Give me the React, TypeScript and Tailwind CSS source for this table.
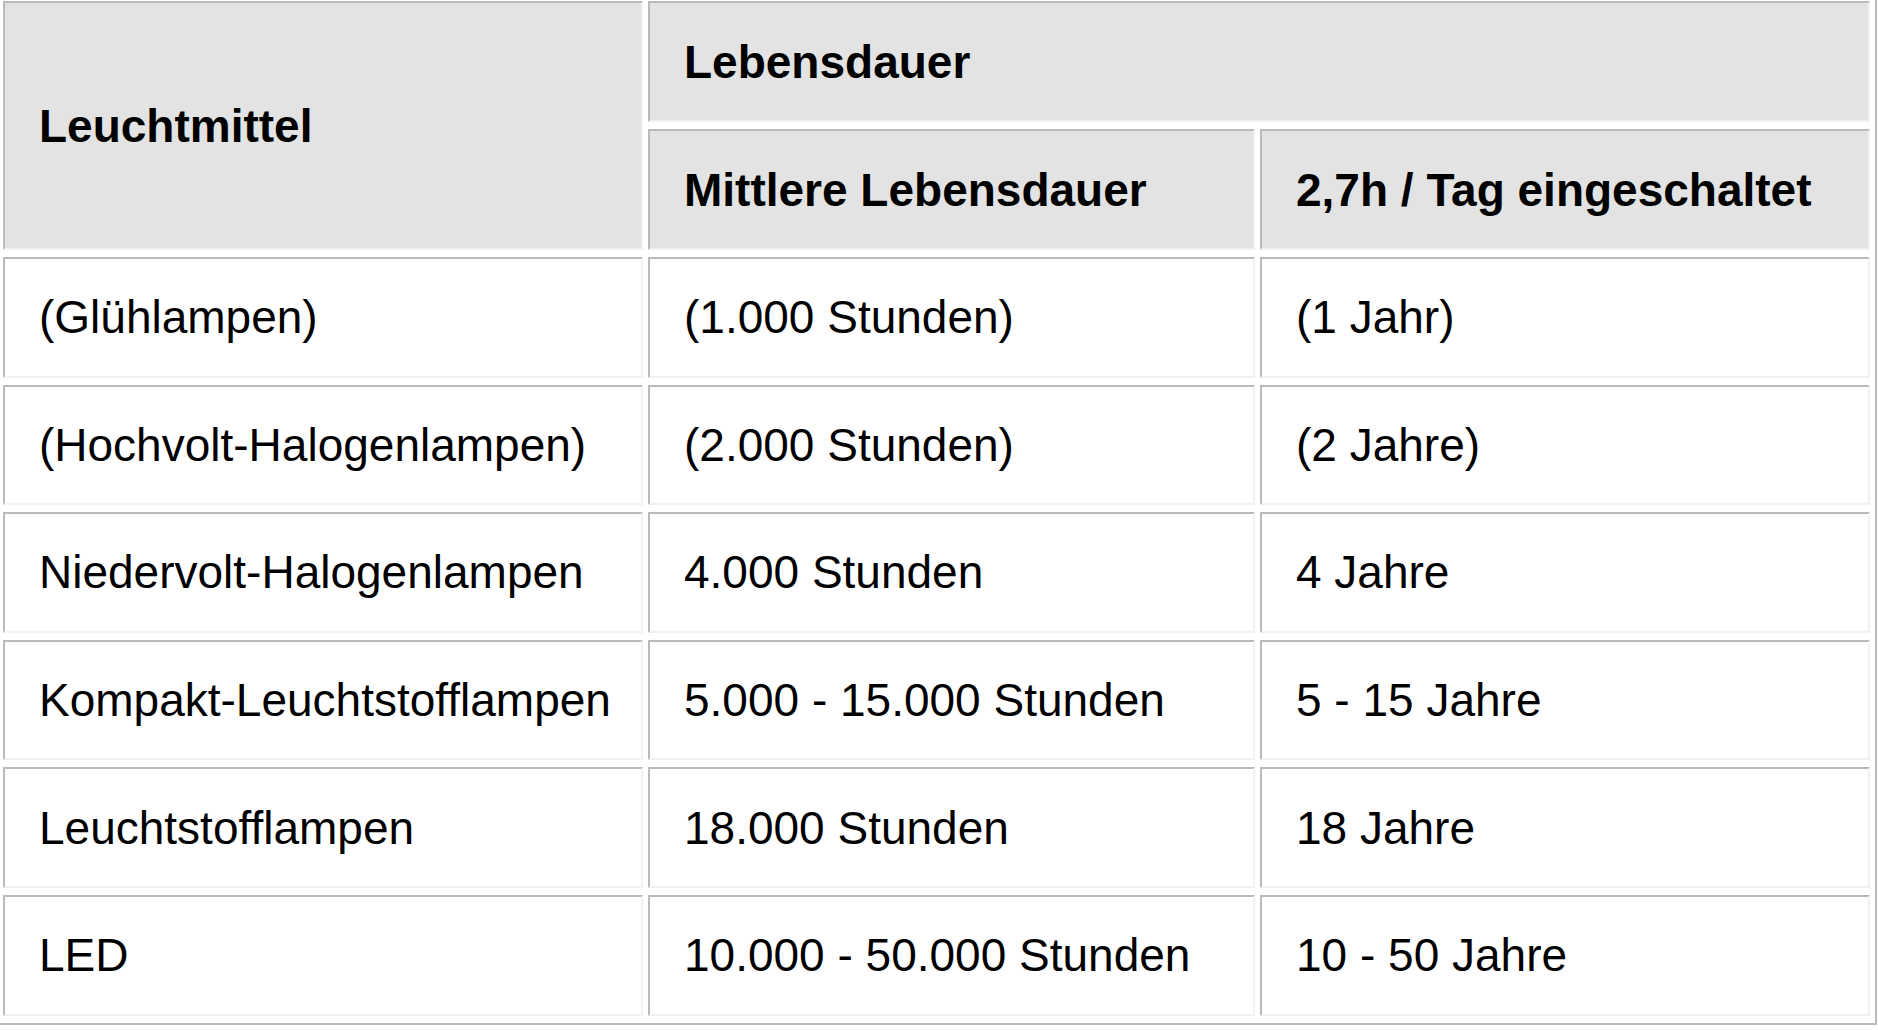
import React from "react";

const rows: [string, string, string][] = [
  ["(Glühlampen)", "(1.000 Stunden)", "(1 Jahr)"],
  ["(Hochvolt-Halogenlampen)", "(2.000 Stunden)", "(2 Jahre)"],
  ["Niedervolt-Halogenlampen", "4.000 Stunden", "4 Jahre"],
  ["Kompakt-Leuchtstofflampen", "5.000 - 15.000 Stunden", "5 - 15 Jahre"],
  ["Leuchtstofflampen", "18.000 Stunden", "18 Jahre"],
  ["LED", "10.000 - 50.000 Stunden", "10 - 50 Jahre"],
];

const cell =
  "border-2 border-t-[#bababa] border-l-[#bababa] border-b-[#f1f1f1] border-r-[#f1f1f1] pl-[34px] pr-2 align-middle text-left";

export default function App() {
  return (
    <div className="w-[1878px] h-[1030px] overflow-hidden bg-white">
      <table
        className="ml-[-4px] mt-[-8px] border-separate border-spacing-x-[5px] border-spacing-y-[7px] border-2 border-t-[#f1f1f1] border-l-[#f1f1f1] border-b-[#bababa] border-r-[#bababa] text-black text-[46px] leading-none"
        style={{ fontFamily: '"Liberation Sans", Arial, sans-serif' }}
      >
        <colgroup>
          <col className="w-[640px]" />
          <col className="w-[607px]" />
          <col className="w-[610px]" />
        </colgroup>
        <thead>
          <tr className="h-[121px]">
            <th rowSpan={2} className={`${cell} bg-[#e3e3e3] font-bold w-[640px]`}>
              Leuchtmittel
            </th>
            <th colSpan={2} className={`${cell} bg-[#e3e3e3] font-bold`}>
              Lebensdauer
            </th>
          </tr>
          <tr className="h-[121px]">
            <th className={`${cell} bg-[#e3e3e3] font-bold w-[607px]`}>Mittlere Lebensdauer</th>
            <th className={`${cell} bg-[#e3e3e3] font-bold w-[610px]`}>2,7h / Tag eingeschaltet</th>
          </tr>
        </thead>
        <tbody>
          {rows.map((r, i) => (
            <tr key={i} className="h-[120.6px]">
              <td className={`${cell} bg-white`}>{r[0]}</td>
              <td className={`${cell} bg-white`}>{r[1]}</td>
              <td className={`${cell} bg-white`}>{r[2]}</td>
            </tr>
          ))}
        </tbody>
      </table>
    </div>
  );
}
